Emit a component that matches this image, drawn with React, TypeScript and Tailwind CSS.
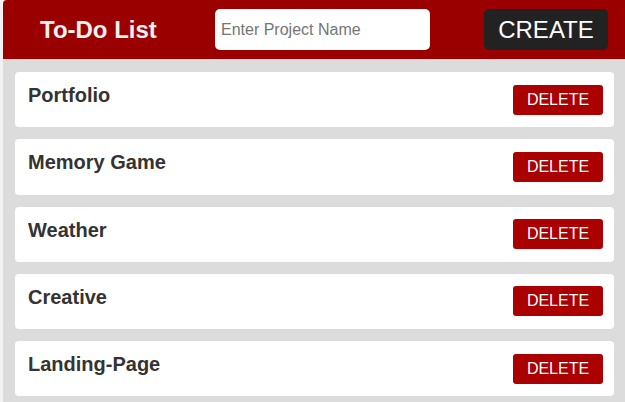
import { useState } from "react";

const initialProjects = ["Portfolio", "Memory Game", "Weather", "Creative", "Landing-Page"];

export default function App() {
  const [projects, setProjects] = useState<string[]>(initialProjects);
  const [name, setName] = useState("");

  const createProject = () => {
    if (!name.trim()) return;
    setProjects([...projects, name.trim()]);
    setName("");
  };

  const deleteProject = (idx: number) => {
    setProjects(projects.filter((_, i) => i !== idx));
  };

  return (
    <div className="min-h-screen bg-[#f2f2f2] pl-[3px] font-['Liberation_Sans',Arial,sans-serif]">
      <div className="min-h-screen bg-[#dcdcdc] rounded-tl-[4px] pb-4">
        <header className="h-[59px] bg-[#9b0000] rounded-tl-[4px] flex items-center pl-[37px]">
          <h1 className="text-[24px] font-bold text-[#f1f1f1] w-[120px] whitespace-nowrap leading-none">
            To-Do List
          </h1>
          <input
            value={name}
            onChange={(e) => setName(e.target.value)}
            placeholder="Enter Project Name"
            className="ml-[55px] w-[215px] h-[41px] bg-white rounded-[5px] pl-[6px] text-[16px] text-[#333] placeholder:text-[#757575] outline-none"
          />
          <button
            onClick={createProject}
            className="ml-[54px] w-[124px] h-[41px] bg-[#222222] rounded-[5px] text-white text-[24px] leading-none"
          >
            CREATE
          </button>
        </header>

        <ul className="pl-[12px] pr-[11px] pt-[13px] flex flex-col gap-[12px]">
          {projects.map((p, i) => (
            <li
              key={p + i}
              className="h-[55.25px] bg-white rounded-[4px] flex items-center justify-between pl-[13px] pr-[11px]"
            >
              <span className="text-[20px] font-bold text-[#333333] pb-2 leading-[23px]">{p}</span>
              <button
                onClick={() => deleteProject(i)}
                className="w-[90px] h-[30px] bg-[#aa0000] rounded-[3px] text-white text-[16px] leading-none"
              >
                DELETE
              </button>
            </li>
          ))}
        </ul>
      </div>
    </div>
  );
}
